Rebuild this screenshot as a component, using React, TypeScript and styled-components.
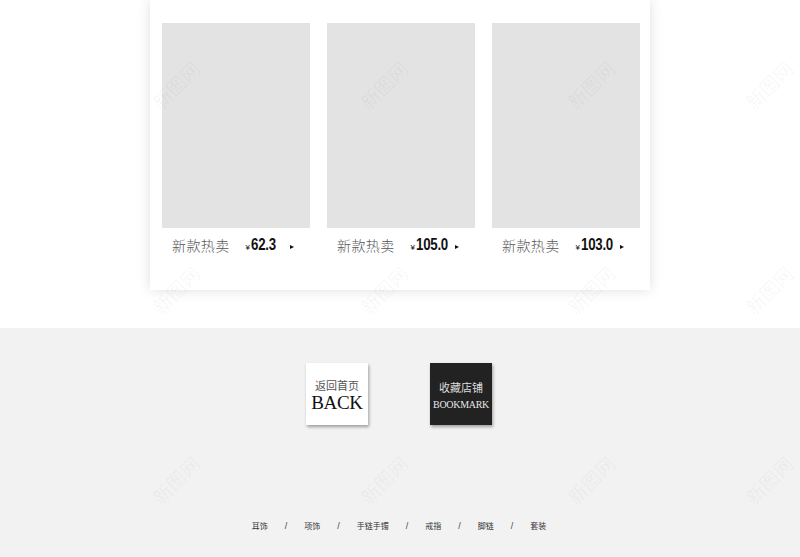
import React from "react";
import styled, { createGlobalStyle } from "styled-components";

const Global = createGlobalStyle`
  html, body { margin: 0; padding: 0; background: #f2f2f2; }
  body { font-family: "Noto Sans CJK SC", "Liberation Sans", sans-serif; overflow: hidden; }
  #root { width: 800px; height: 557px; }
`;

const Page = styled.div`
  position: relative;
  width: 800px;
  height: 557px;
  overflow: hidden;
  display: flex;
  flex-direction: column;
`;

const TopSection = styled.section`
  height: 328px;
  background: #ffffff;
  display: flex;
  justify-content: center;
  position: relative;
  z-index: 1;
`;

const Card = styled.div`
  width: 500px;
  height: 290px;
  box-sizing: border-box;
  background: #ffffff;
  box-shadow: 0 0 12px rgba(0, 0, 0, 0.13);
  padding: 23px 10px 0 12px;
  display: flex;
  gap: 17px;
`;

const Product = styled.div`
  width: 148px;
  display: flex;
  flex-direction: column;
`;

const Thumb = styled.div`
  width: 148px;
  height: 205px;
  background: #e3e3e3;
`;

const Caption = styled.div`
  height: 34px;
  display: flex;
  align-items: center;
  padding: 0 16px 0 10px;
`;

const Name = styled.span`
  font-family: "Noto Sans CJK SC", sans-serif;
  font-size: 14px;
  font-weight: 300;
  color: #555;
  letter-spacing: 0.4px;
  margin-right: 16px;
`;

const Yen = styled.span`
  font-family: "Liberation Sans", sans-serif;
  font-size: 8px;
  color: #111;
  margin-top: 5px;
  margin-right: 1px;
`;

const Amount = styled.span`
  display: inline-block;
  font-family: "Liberation Sans", sans-serif;
  font-weight: 700;
  font-size: 17px;
  color: #111;
  letter-spacing: -0.3px;
  transform: scaleX(0.78);
  transform-origin: left center;
  margin-right: -9px;
`;

const Arrow = styled.span`
  margin-left: auto;
  width: 0;
  height: 0;
  border-left: 4px solid #111;
  border-top: 2.5px solid transparent;
  border-bottom: 2.5px solid transparent;
  margin-top: 3px;
`;

const Bottom = styled.section`
  flex: 1;
  background: #f2f2f2;
  box-shadow: 0 -4px 10px rgba(0, 0, 0, 0.05);
  position: relative;
  z-index: 0;
  display: flex;
  flex-direction: column;
  align-items: center;
  padding-top: 35px;
`;

const ButtonRow = styled.div`
  display: flex;
  gap: 62px;
  margin-left: -2px;
`;

const NavButton = styled.div<{ $dark?: boolean }>`
  width: 62px;
  height: 62px;
  box-sizing: border-box;
  background: ${(p) => (p.$dark ? "#222222" : "#ffffff")};
  box-shadow: 1px 2px 3px rgba(0, 0, 0, 0.35);
  display: flex;
  flex-direction: column;
  align-items: center;
  justify-content: center;
  padding-top: 3px;
`;

const BtnCn = styled.span<{ $dark?: boolean }>`
  font-family: "Noto Sans CJK SC", sans-serif;
  font-size: 11px;
  line-height: 14px;
  color: ${(p) => (p.$dark ? "#dddddd" : "#555555")};
`;

const BtnEn = styled.span<{ $size: number; $dark?: boolean }>`
  font-family: "Liberation Serif", serif;
  font-size: ${(p) => p.$size}px;
  line-height: ${(p) => p.$size + 3}px;
  color: ${(p) => (p.$dark ? "#e6e6e6" : "#111111")};
  margin-top: ${(p) => (p.$size > 14 ? 0 : 4)}px;
  letter-spacing: -0.3px;
`;

const Links = styled.nav`
  margin-top: 95px;
  display: flex;
  align-items: center;
  gap: 17px;
  margin-left: -2px;
`;

const LinkItem = styled.span`
  font-family: "Noto Sans CJK SC", sans-serif;
  font-size: 8px;
  color: #333;
`;

const Slash = styled.span`
  font-family: "Liberation Sans", sans-serif;
  font-size: 9px;
  color: #444;
`;

const Watermark = styled.span`
  position: absolute;
  font-family: "Noto Sans CJK SC", sans-serif;
  font-size: 19px;
  color: rgba(0, 0, 0, 0.045);
  transform: rotate(-45deg);
  pointer-events: none;
  z-index: 5;
  white-space: nowrap;
`;

const products = [
  { price: "62.3" },
  { price: "105.0" },
  { price: "103.0" },
];

const links = ["耳饰", "项饰", "手链手镯", "戒指", "脚链", "套装"];

const marks: [number, number][] = [];
[85, 290, 480].forEach((y) =>
  [175, 383, 590, 768].forEach((x) => marks.push([x, y]))
);

export default function App() {
  return (
    <Page>
      <Global />
      <TopSection>
        <Card>
          {products.map((p, i) => (
            <Product key={i}>
              <Thumb />
              <Caption>
                <Name>新款热卖</Name>
                <Yen>¥</Yen>
                <Amount>{p.price}</Amount>
                <Arrow />
              </Caption>
            </Product>
          ))}
        </Card>
      </TopSection>
      <Bottom>
        <ButtonRow>
          <NavButton>
            <BtnCn>返回首页</BtnCn>
            <BtnEn $size={19}>BACK</BtnEn>
          </NavButton>
          <NavButton $dark>
            <BtnCn $dark>收藏店铺</BtnCn>
            <BtnEn $size={10} $dark>BOOKMARK</BtnEn>
          </NavButton>
        </ButtonRow>
        <Links>
          {links.map((l, i) => (
            <React.Fragment key={l}>
              {i > 0 && <Slash>/</Slash>}
              <LinkItem>{l}</LinkItem>
            </React.Fragment>
          ))}
        </Links>
      </Bottom>
      {marks.map(([x, y], i) => (
        <Watermark key={i} style={{ left: x - 28, top: y - 14 }}>
          新图网
        </Watermark>
      ))}
    </Page>
  );
}
